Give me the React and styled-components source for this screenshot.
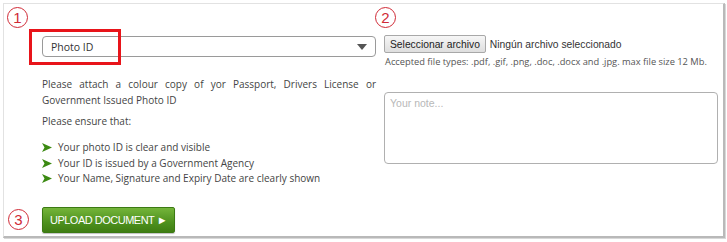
import styled, { createGlobalStyle } from "styled-components";

const Global = createGlobalStyle`
  html, body { margin: 0; padding: 0; background: #fff; }
  body { width: 727px; height: 242px; overflow: hidden; }
`;

const Page = styled.div`
  padding: 3px 0 0 3px;
`;

const Card = styled.div`
  position: relative;
  box-sizing: border-box;
  width: 722px;
  height: 235px;
  background: #fff;
  border: 1px solid #e2e2e2;
  border-right: 2px solid #b9b9b9;
  border-bottom: 2px solid #b9b9b9;
  box-shadow: 1px 1px 0 #d8d8d8;
  display: grid;
  grid-template-columns: 334px 334px;
  column-gap: 8px;
  padding: 32px 0 0 38px;
`;

const Column = styled.div`
  display: flex;
  flex-direction: column;
`;

const Marker = styled.div`
  position: absolute;
  left: ${(p) => p.$x}px;
  top: ${(p) => p.$y}px;
  width: 19px;
  height: 19px;
  border: 1.3px solid #d02a36;
  border-radius: 50%;
  color: #d02a36;
  font: 15px/19px "Liberation Sans", Arial, sans-serif;
  text-align: center;
`;

const Highlight = styled.div`
  position: absolute;
  left: 25px;
  top: 25px;
  width: 86px;
  height: 30px;
  border: 3.5px solid #e8141a;
`;

const Select = styled.div`
  box-sizing: border-box;
  height: 21px;
  border: 1px solid #9a9a9a;
  border-radius: 4px;
  display: flex;
  align-items: center;
  justify-content: space-between;
  padding: 0 8px 0 8px;
  font: 10.5px "Open Sans", sans-serif;
  color: #333;
`;

const Caret = styled.span`
  width: 0;
  height: 0;
  border-left: 5px solid transparent;
  border-right: 5px solid transparent;
  border-top: 6px solid #555;
`;

const Text = styled.p`
  margin: ${(p) => p.$top}px 0 0;
  font: 10px/16px "Open Sans", sans-serif;
  color: #444;
  text-align: justify;
`;

const List = styled.ul`
  list-style: none;
  margin: 11px 0 0;
  padding: 0;
`;

const Item = styled.li`
  display: flex;
  align-items: center;
  gap: 6px;
  font: 10px/15.5px "Open Sans", sans-serif;
  color: #444;
`;

const Arrow = () => (
  <svg width="10" height="9" viewBox="0 0 10 9">
    <path d="M0 0 L10 4.5 L0 9 L2.5 4.5 Z" fill="#3b8a12" />
  </svg>
);

const UploadButton = styled.button`
  align-self: flex-start;
  margin-top: 20px;
  width: 133px;
  height: 26px;
  border: 1px solid #3c7a13;
  border-radius: 2px;
  background: linear-gradient(#74b53a, #4e911e 60%, #3f7d12);
  color: #fff;
  font: 11px "Liberation Sans", Arial, sans-serif;
  letter-spacing: -0.5px;
  padding: 0;
  box-shadow: 0 1px 1px rgba(0, 0, 0, 0.25);
`;

const FileRow = styled.div`
  display: flex;
  align-items: center;
  gap: 4px;
  margin-top: -1px;
  font: 10.3px "Liberation Sans", Arial, sans-serif;
  color: #333;
`;

const FileButton = styled.button`
  height: 18px;
  padding: 0 5px;
  border: 1px solid #a8a8a8;
  border-radius: 2px;
  background: linear-gradient(#f6f6f6, #dedede);
  font: 10.3px "Liberation Sans", Arial, sans-serif;
  color: #222;
`;

const Hint = styled.div`
  margin-top: 2px;
  font: 9.3px/14px "Open Sans", sans-serif;
  color: #555;
  padding-left: 1px;
`;

const Note = styled.textarea`
  box-sizing: border-box;
  margin-top: 23px;
  width: 334px;
  height: 72px;
  border: 1.5px solid #b0b0b0;
  border-radius: 4px;
  padding: 4px 5px;
  resize: none;
  font: 10.5px "Liberation Sans", Arial, sans-serif;
  &::placeholder { color: #b8b8b8; }
`;

export default function App() {
  return (
    <Page>
      <Global />
      <Card>
        <Marker $x={3} $y={3}>1</Marker>
        <Marker $x={371} $y={3}>2</Marker>
        <Marker $x={4} $y={205}>3</Marker>
        <Highlight />
        <Column>
          <Select>
            Photo ID
            <Caret />
          </Select>
          <Text $top={19}>
            Please attach a colour copy of yor Passport, Drivers License or Government Issued Photo ID
          </Text>
          <Text $top={5}>Please ensure that:</Text>
          <List>
            <Item><Arrow />Your photo ID is clear and visible</Item>
            <Item><Arrow />Your ID is issued by a Government Agency</Item>
            <Item><Arrow />Your Name, Signature and Expiry Date are clearly shown</Item>
          </List>
          <UploadButton>UPLOAD DOCUMENT ►</UploadButton>
        </Column>
        <Column>
          <FileRow>
            <FileButton>Seleccionar archivo</FileButton>
            Ningún archivo seleccionado
          </FileRow>
          <Hint>Accepted file types: .pdf, .gif, .png, .doc, .docx and .jpg. max file size 12 Mb.</Hint>
          <Note placeholder="Your note..." />
        </Column>
      </Card>
    </Page>
  );
}
